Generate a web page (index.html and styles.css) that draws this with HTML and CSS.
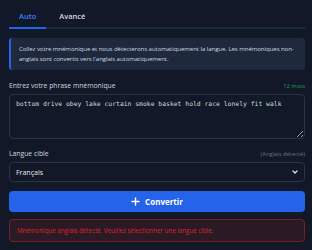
FILE: index.html
```html
<!DOCTYPE html>
<html lang="fr">
<head>
  <meta charset="UTF-8" />
  <meta name="viewport" content="width=device-width, initial-scale=1.0"/>
  <title>Convertisseur de mnémonique</title>
  <link rel="stylesheet" href="styles.css">
</head>
<body>
  <main class="panel">
    <nav class="tabs">
      <button class="tab active">Auto</button>
      <button class="tab">Avancé</button>
    </nav>

    <div class="info">
      Collez votre mnémonique et nous détecterons automatiquement la langue. Les mnémoniques non-anglais sont convertis vers l'anglais automatiquement.
    </div>

    <div class="field">
      <div class="field-head">
        <label for="phrase">Entrez votre phrase mnémonique</label>
        <span class="count">12 mots</span>
      </div>
      <textarea id="phrase" spellcheck="false">bottom drive obey lake curtain smoke basket hold race lonely fit walk</textarea>
    </div>

    <div class="field">
      <div class="field-head">
        <label for="lang">Langue cible</label>
        <span class="hint">(Anglais détecté)</span>
      </div>
      <div class="select">
        <span>Français</span>
        <svg width="6" height="4" viewBox="0 0 6 4"><path d="M1 1l2 2 2-2" fill="none" stroke="#e5e7eb" stroke-width="1.2" stroke-linecap="round" stroke-linejoin="round"/></svg>
      </div>
    </div>

    <button class="convert">
      <svg width="9" height="9" viewBox="0 0 9 9"><path d="M4.5 1v7M1 4.5h7" stroke="#fff" stroke-width="1.4" stroke-linecap="round"/></svg>
      Convertir
    </button>

    <div class="error">Mnémonique anglais détecté. Veuillez sélectionner une langue cible.</div>
  </main>
</body>
</html>
```

FILE: styles.css
```css
body {
  margin: 0;
  background: #111827;
  color: #e5e7eb;
  font-family: 'Open Sans', 'Noto Sans', sans-serif;
  overflow: hidden;
}

.panel {
  display: flex;
  flex-direction: column;
  padding: 8px 7px 0 9px;
}

.tabs {
  display: flex;
  gap: 3px;
  border-bottom: 2px solid #1f2937;
}

.tab {
  background: none;
  border: none;
  border-bottom: 2px solid transparent;
  margin-bottom: -2px;
  padding: 3px 10px 6px;
  font-family: inherit;
  font-size: 7.5px;
  font-weight: 600;
  color: #d1d5db;
}

.tab.active {
  color: #3b82f6;
  border-bottom-color: #2563eb;
}

.info {
  margin-top: 9px;
  padding: 6px 6px 6px 8px;
  background: #1e293b;
  border-left: 2px solid #2563eb;
  border-radius: 3px;
  font-size: 6.1px;
  letter-spacing: -0.08px;
  line-height: 10px;
  color: #cbd5e1;
}

.field {
  margin-top: 11px;
}

.field + .field {
  margin-top: 10px;
}

.field-head {
  display: flex;
  justify-content: space-between;
  align-items: baseline;
  margin-bottom: 4px;
}

.field-head label {
  font-size: 6.8px;
  color: #d1d5db;
}

.count {
  font-size: 5.8px;
  color: #16a34a;
}

.hint {
  font-size: 5.8px;
  color: #6b7280;
}

textarea {
  display: block;
  box-sizing: border-box;
  width: 100%;
  height: 45px;
  padding: 5px 6px;
  background: #111827;
  border: 1px solid #2a3342;
  border-radius: 4px;
  color: #d1d5db;
  font-family: 'DejaVu Sans Mono', monospace;
  font-size: 6.4px;
  line-height: 9px;
  resize: vertical;
}

.select {
  display: flex;
  justify-content: space-between;
  align-items: center;
  height: 18px;
  padding: 0 6px;
  border: 1px solid #2a3342;
  border-radius: 4px;
  font-size: 7px;
  color: #e5e7eb;
}

.convert {
  display: flex;
  align-items: center;
  justify-content: center;
  gap: 5px;
  margin-top: 9px;
  height: 21px;
  border: none;
  border-radius: 4px;
  background: #2563eb;
  color: #fff;
  font-family: inherit;
  font-size: 8px;
  font-weight: 700;
}

.error {
  margin-top: 7px;
  padding: 6px 7px;
  line-height: 9px;
  background: #2a1a26;
  border: 1px solid #7f1d1d;
  border-radius: 4px;
  font-size: 6.2px;
  color: #dc2626;
}
```
